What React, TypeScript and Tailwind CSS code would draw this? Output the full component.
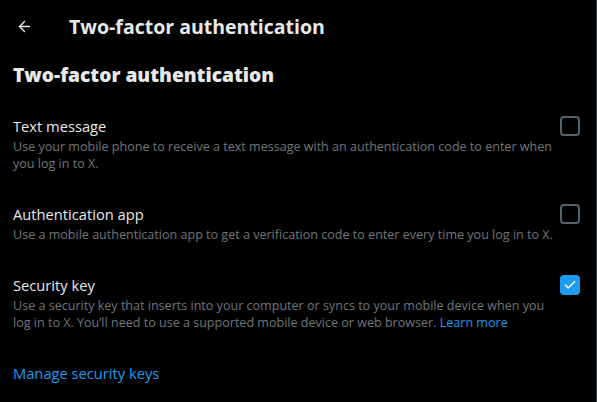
import { ArrowLeft, Check } from "lucide-react";

type Option = {
  title: string;
  desc: string;
  checked: boolean;
  learnMore?: boolean;
};

const options: Option[] = [
  {
    title: "Text message",
    desc: "Use your mobile phone to receive a text message with an authentication code to enter when you log in to X.",
    checked: false,
  },
  {
    title: "Authentication app",
    desc: "Use a mobile authentication app to get a verification code to enter every time you log in to X.",
    checked: false,
  },
  {
    title: "Security key",
    desc: "Use a security key that inserts into your computer or syncs to your mobile device when you log in to X. You\u2019ll need to use a supported mobile device or web browser.",
    checked: true,
    learnMore: true,
  },
];

function Box({ checked }: { checked: boolean }) {
  if (checked) {
    return (
      <div className="w-5 h-5 rounded-[4px] bg-[#1d9bf0] flex items-center justify-center shrink-0">
        <Check className="w-[14px] h-[14px] text-white" strokeWidth={2.5} />
      </div>
    );
  }
  return <div className="w-5 h-5 rounded-[4px] border-2 border-[#536471] shrink-0" />;
}

export default function App() {
  return (
    <div
      className="w-[597px] h-[402px] bg-black text-[#e7e9ea] border-r border-[#2f3336] overflow-hidden"
      style={{ fontFamily: '"Open Sans", "Noto Sans", sans-serif' }}
    >
      {/* Top bar */}
      <div className="h-[53px] flex items-center pl-4">
        <ArrowLeft className="w-[17px] h-[17px] text-[#e7e9ea]" strokeWidth={2} />
        <h1 className="ml-[36px] text-[19.5px] font-bold leading-6">Two-factor authentication</h1>
      </div>

      <h2 className="px-[13px] pt-[10px] pb-[13px] text-[19.2px] font-extrabold leading-6">
        Two-factor authentication
      </h2>

      <div className="flex flex-col">
        {options.map((o) => (
          <div key={o.title} className="flex items-start pl-[13px] pr-[16px] py-4">
            <div className="flex-1">
              <div className="text-[14.7px] leading-5">{o.title}</div>
              <p className="mt-[2px] text-[12.55px] leading-[17px] text-[#71767b]">
                {o.desc}
                {o.learnMore && <span className="text-[#1d9bf0]"> Learn more</span>}
              </p>
            </div>
            <Box checked={o.checked} />
          </div>
        ))}
      </div>

      <div className="px-[13px] pt-4 text-[14.7px] leading-5 text-[#1d9bf0]">Manage security keys</div>
    </div>
  );
}
